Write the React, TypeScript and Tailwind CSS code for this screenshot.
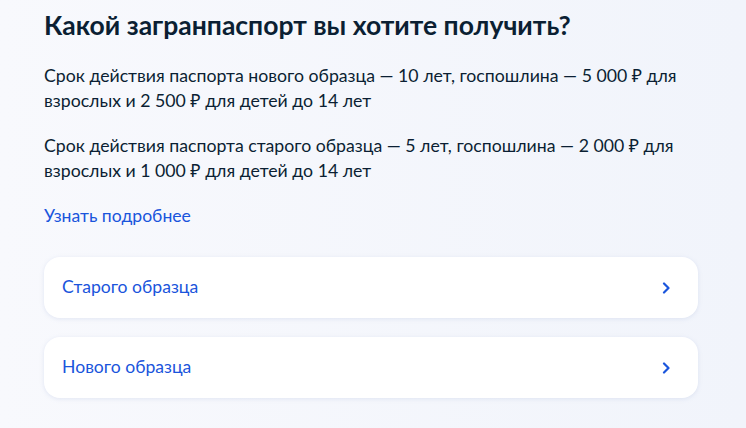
import React from "react";

function Chevron() {
  return (
    <svg width="8" height="12" viewBox="0 0 8 12" fill="none">
      <path d="M2 1.5 6.5 6 2 10.5" stroke="#1a55dc" strokeWidth="2.2" strokeLinecap="round" strokeLinejoin="round" />
    </svg>
  );
}

function Option({ label }: { label: string }) {
  return (
    <button className="flex h-[61px] w-full items-center justify-between rounded-2xl bg-white pl-[18px] pr-[28px] text-left shadow-[0_1px_4px_rgba(160,175,215,0.25)]">
      <span className="text-[17.6px] text-[#1a55dc]">{label}</span>
      <Chevron />
    </button>
  );
}

export default function App() {
  return (
    <div
      className="min-h-[428px] w-full bg-gradient-to-r from-[#f8f9fd] to-[#f1f4fb] pl-[44px] pr-[48px] pt-[8px] text-[#0b1f33]"
      style={{ fontFamily: "Lato, 'Noto Sans', sans-serif" }}
    >
      <h1 className="text-[26.5px] font-bold leading-[34px]">Какой загранпаспорт вы хотите получить?</h1>
      <p className="mt-[21px] text-[17.7px] leading-[25px]">
        Срок действия паспорта нового образца — 10 лет, госпошлина — 5 000 ₽ для взрослых и 2 500 ₽ для детей до 14 лет
      </p>
      <p className="mt-[20px] text-[17.7px] leading-[25px]">
        Срок действия паспорта старого образца — 5 лет, госпошлина — 2 000 ₽ для взрослых и 1 000 ₽ для детей до 14 лет
      </p>
      <a className="mt-[20px] block text-[17.6px] leading-[25px] text-[#1a55dc]" href="#">
        Узнать подробнее
      </a>
      <div className="mt-[29px] flex w-[654px] flex-col gap-[19px]">
        <Option label="Старого образца" />
        <Option label="Нового образца" />
      </div>
    </div>
  );
}
